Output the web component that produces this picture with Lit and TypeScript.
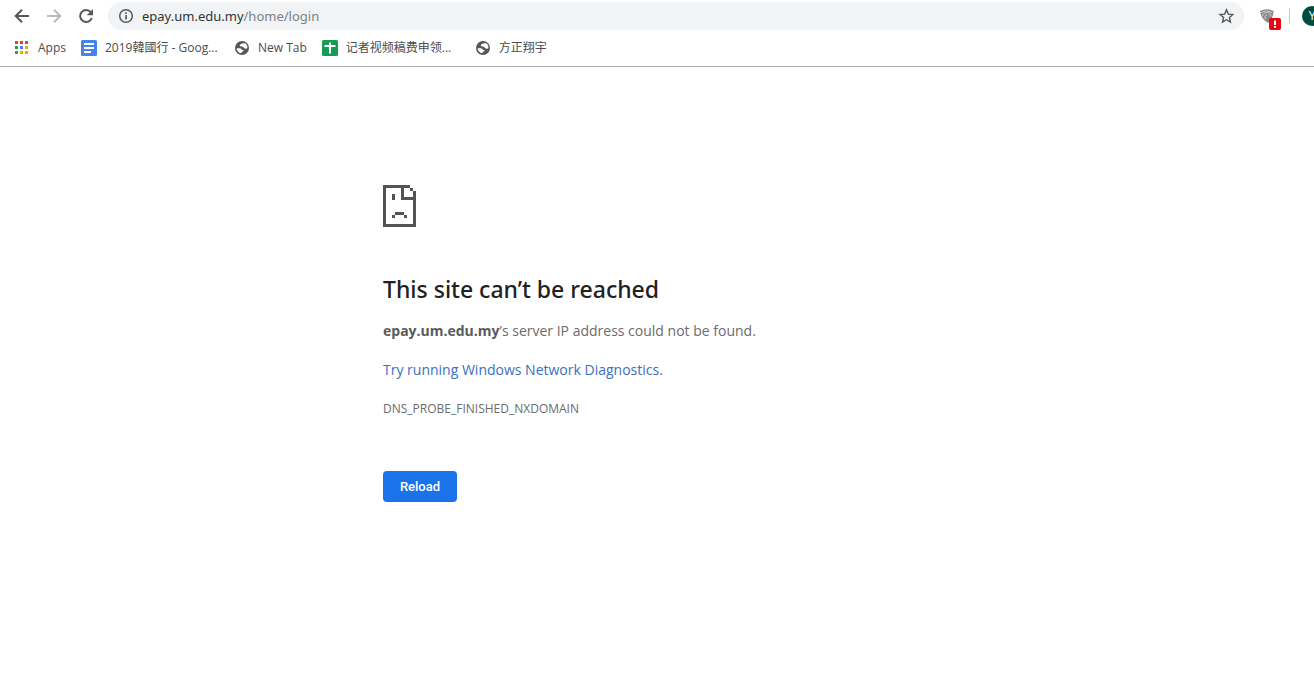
import { LitElement, html, css, svg } from "lit";
import { customElement } from "lit/decorators.js";

const globe = html`<svg width="16" height="16" viewBox="0 0 16 16" aria-hidden="true">
  <circle cx="8" cy="8" r="7" fill="#54575b" />
  <path d="M11.800 3.600 9 3.300C7.200 4 5.600 4.300 5.800 5.600c.2 1.200 2 .9 3.200 1.300 1.300.5 1.300 1.600 2.400 1.800.9.200 1.500-.1 2-.6.100-1.900-.5-3.400-1.600-4.500z" fill="#fff" />
  <path d="M2.600 8.200c1.400.2 2.900-.2 4 .2 1.200.5 1.200 1.400 2.400 1.700.9.300.8 1.300-.4 1.500-.8.200-.7.900-1.300 1.600-2.700-.3-4.600-2.500-4.700-5z" fill="#fff" />
</svg>`;

const appColours = ["#d9453c", "#d9453c", "#d9453c", "#2f9e58", "#4285f4", "#f2a600", "#2f9e58", "#f2a600", "#f2a600"];

@customElement("app-root")
export class AppRoot extends LitElement {
  static styles = css`
    :host {
      display: block;
      min-height: 100vh;
      background: #fff;
      color: #4a4d50;
      font-family: "Open Sans", "Noto Sans CJK SC", sans-serif;
      overflow: hidden;
    }
    svg { display: block; flex: none; }
    button { font: inherit; border: 0; padding: 0; background: none; }
    a { text-decoration: none; color: inherit; }
    .toolbar {
      display: flex;
      align-items: center;
      height: 32px;
      padding-left: 12px;
      overflow: hidden;
    }
    .nav { display: flex; gap: 12px; margin-right: 12px; }
    .address {
      flex: 1;
      display: flex;
      align-items: center;
      gap: 8px;
      height: 28px;
      padding: 0 10px;
      border-radius: 14px;
      background: #f1f3f4;
    }
    .url {
      position: relative;
      flex: 1;
      display: flex;
      font-family: "Noto Sans", sans-serif;
      font-size: 13px;
      line-height: 20px;
    }
    .url input {
      position: absolute;
      inset: 0;
      width: 100%;
      border: 0;
      padding: 0;
      background: none;
      color: transparent;
      font: inherit;
      outline: none;
    }
    .host { color: #303336; }
    .path { color: #7c8085; }
    .tools { display: flex; align-items: center; margin-left: 14px; }
    .extension { position: relative; }
    .badge {
      position: absolute;
      left: 11px;
      top: 10px;
      width: 12px;
      height: 12px;
      border-radius: 2px;
      background: #e30613;
    }
    .divider { width: 1px; height: 16px; margin: 0 12px 0 11px; background: #c8cacc; }
    .avatar {
      width: 20px;
      height: 20px;
      margin-right: -8px;
      border-radius: 50%;
      background: #004d40;
      color: #fff;
      font-size: 12px;
      line-height: 20px;
      text-align: center;
    }
    .bookmarks {
      display: flex;
      align-items: center;
      gap: 15px;
      height: 35px;
      padding: 0 13px 2px;
      border-bottom: 1px solid #b0b0b0;
      box-sizing: border-box;
      font-size: 12px;
      line-height: 18px;
    }
    .bookmark { display: flex; align-items: center; gap: 8px; white-space: nowrap; }
    .long { width: 138px; }
    .error { max-width: 548px; margin: 0 auto; padding: 118px 16px 0; }
    h1 {
      margin: 44px 0 0;
      font-family: "Noto Sans", sans-serif;
      font-size: 23px;
      line-height: 36px;
      font-weight: 500;
      color: #202124;
    }
    p { margin: 0; font-size: 14px; line-height: 20px; color: #6b6b6b; }
    strong { color: #5a5a5a; }
    .summary { margin-top: 14px; }
    .suggestion { margin-top: 19px; }
    .suggestion a { color: #3a70c0; }
    .code { margin-top: 19px; font-size: 12px; }
    .reload {
      display: block;
      min-width: 74px;
      height: 31px;
      margin-top: 52px;
      padding: 0 16px;
      border-radius: 4px;
      background: #1a73e8;
      color: #fff;
      font: 500 13px/31px Roboto, sans-serif;
    }
  `;

  render() {
    return html`
      <header>
        <div class="toolbar">
          <nav class="nav" aria-label="History">
            <button aria-label="Back"><svg width="20" height="20" viewBox="0 0 20 20" fill="none" stroke="#54575b" stroke-width="2"><path d="M17 10H4M10 3.700 3.700 10l6.300 6.300" /></svg></button>
            <button aria-label="Forward"><svg width="20" height="20" viewBox="0 0 20 20" fill="none" stroke="#b8babc" stroke-width="2"><path d="M3 10h13M10 3.700l6.300 6.300-6.300 6.300" /></svg></button>
            <button aria-label="Refresh"><svg width="20" height="20" viewBox="0 0 20 20"><path d="M14.800 6.200A6 6 0 1 0 15.800 12" fill="none" stroke="#54575b" stroke-width="2" /><path d="M17 3v6.300h-6.300z" fill="#54575b" /></svg></button>
          </nav>
          <div class="address">
            <svg width="16" height="16" viewBox="0 0 16 16" aria-hidden="true"><circle cx="8" cy="8" r="6.300" fill="none" stroke="#54575b" stroke-width="1.500" /><path d="M7.200 7h1.600v4.500H7.200zM7.200 4.300h1.600v1.600H7.200z" fill="#54575b" /></svg>
            <div class="url"><span class="host">epay.um.edu.my</span><span class="path">/home/login</span><input aria-label="Address" /></div>
            <button aria-label="Bookmark this page"><svg width="16" height="16" viewBox="0 0 16 16"><path d="M8.500 1.800l1.800 4.300 4.600.4-3.500 3 1 4.600-3.900-2.400-3.900 2.400 1-4.600-3.500-3 4.600-.4z" fill="none" stroke="#54575b" stroke-width="1.400" /></svg></button>
          </div>
          <div class="tools">
            <button class="extension" aria-label="Extension">
              <svg width="20" height="16" viewBox="0 0 20 16"><path d="M2 3Q8.500-.5 15.500 3q0 7-5.500 12Q3 11 2 3z" fill="#8a8a8a" /><path d="M2.500 5q6-4 11.500-.5M4.500 8q1-4 5-3.500t3 4M7.500 11q-1.500-4 1.500-4" fill="none" stroke="#d0d0d0" /></svg>
              <svg class="badge" viewBox="0 0 12 12"><path d="M5 2.500h2v4.500H5zM5 8h2v1.800H5z" fill="#fff" /></svg>
            </button>
            <span class="divider"></span>
            <button class="avatar" aria-label="Profile">Y</button>
          </div>
        </div>
        <nav class="bookmarks" aria-label="Bookmarks">
          <a class="bookmark" href="#"><svg width="17" height="16" viewBox="0 0 17 16">${appColours.map((c, i) => svg`<rect x=${2 + (i % 3) * 5} y=${1 + Math.floor(i / 3) * 5} width="3" height="3" fill=${c} />`)}</svg>Apps</a>
          <a class="bookmark long" href="#"><svg width="16" height="16" viewBox="0 0 16 16"><rect width="16" height="16" rx="1.500" fill="#4583ee" /><path d="M3 4h10M3 8h10M3 12h7" stroke="#fff" stroke-width="2" /></svg>2019韓國行 - Goog...</a>
          <a class="bookmark" href="#">${globe}New Tab</a>
          <a class="bookmark long" href="#"><svg width="16" height="16" viewBox="0 0 16 16"><rect width="16" height="16" rx="1.500" fill="#149c55" /><path d="M2.500 6h11M8 2.500v11" stroke="#fff" stroke-width="2" /></svg>记者视频稿费申领...</a>
          <a class="bookmark" href="#">${globe}方正翔宇</a>
        </nav>
      </header>
      <main class="error">
        <svg width="33" height="42" viewBox="0 0 11 14" shape-rendering="crispEdges" fill="#535353" aria-hidden="true"><path d="M0 0h9v1H7v3h3V3h1v11H0zM1 1v12h9V5H6V1zM9 1h1v1H9zM10 2h1v1h-1zM3 3h1v2H3zM4 9h3v1H4zM3 10h1v1H3zM7 10h1v1H7z" fill-rule="evenodd" /></svg>
        <h1>This site can’t be reached</h1>
        <p class="summary"><strong>epay.um.edu.my</strong>’s server IP address could not be found.</p>
        <p class="suggestion"><a href="#">Try running Windows Network Diagnostics.</a></p>
        <p class="code">DNS_PROBE_FINISHED_NXDOMAIN</p>
        <button class="reload">Reload</button>
      </main>
    `;
  }
}
